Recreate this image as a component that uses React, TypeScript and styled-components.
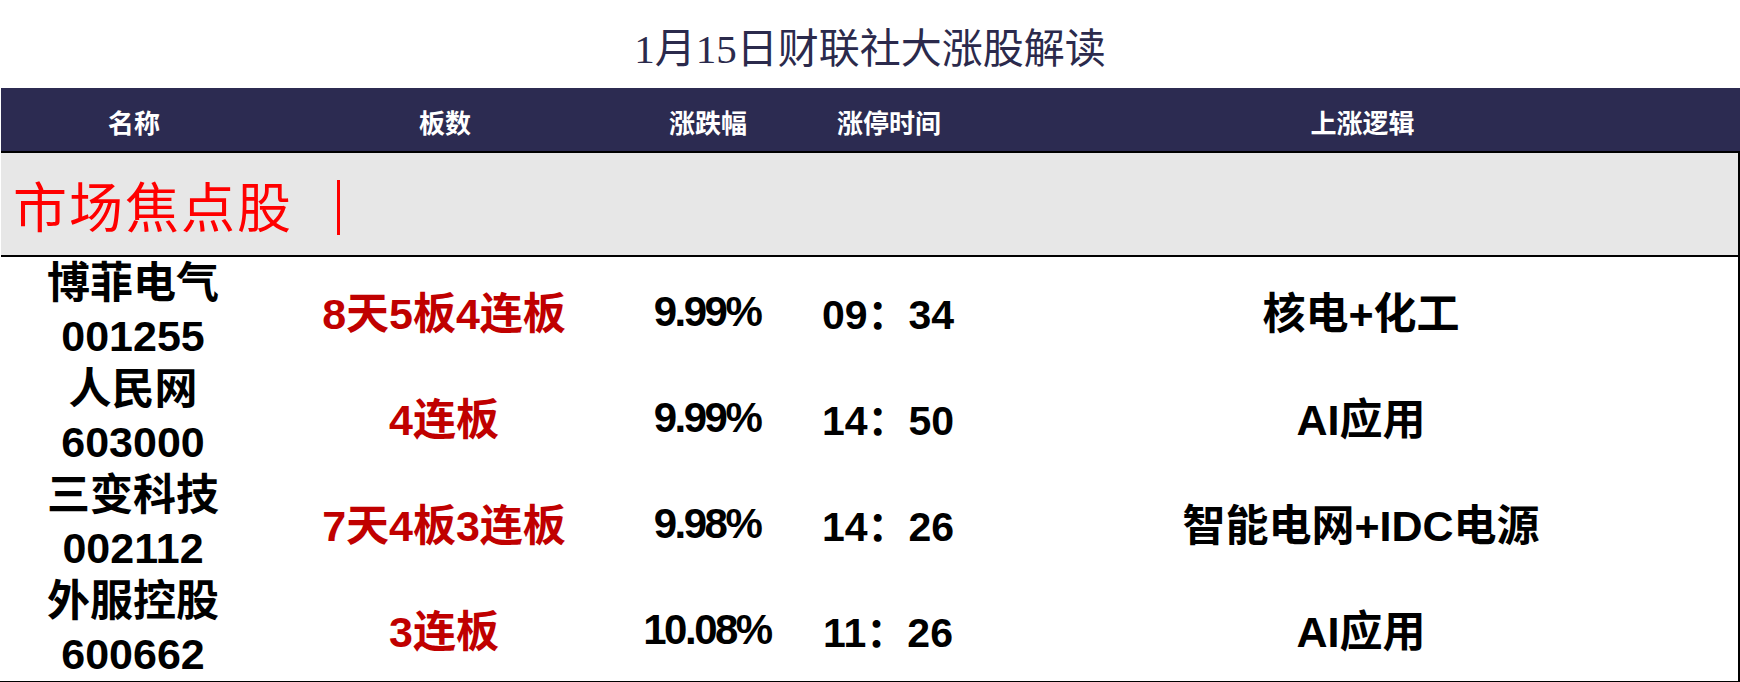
import React from 'react';
import styled, { createGlobalStyle } from 'styled-components';

interface Stock {
  name: string;
  code: string;
  board: string;
  change: string;
  time: string;
  logic: string;
}

const stocks: Stock[] = [
  { name: '博菲电气', code: '001255', board: '8天5板4连板', change: '9.99%', time: '09：34', logic: '核电+化工' },
  { name: '人民网', code: '603000', board: '4连板', change: '9.99%', time: '14：50', logic: 'AI应用' },
  { name: '三变科技', code: '002112', board: '7天4板3连板', change: '9.98%', time: '14：26', logic: '智能电网+IDC电源' },
  { name: '外服控股', code: '600662', board: '3连板', change: '10.08%', time: '11：26', logic: 'AI应用' },
];

const COLUMNS = '266px 356px 170px 192px 1fr';

const GlobalStyle = createGlobalStyle`
  html, body {
    margin: 0;
    padding: 0;
    background: #fff;
  }
  body {
    font-family: 'Liberation Sans', 'Noto Sans CJK SC', sans-serif;
  }
`;

const StyledPage = styled.div`
  width: 1740px;
  display: flex;
  flex-direction: column;
`;

const StyledTitle = styled.h1`
  margin: 0;
  height: 88px;
  display: flex;
  align-items: center;
  justify-content: center;
  padding-top: 2px;
  box-sizing: border-box;
  font-family: 'Liberation Serif', 'Noto Sans CJK SC', serif;
  font-size: 41px;
  font-weight: 400;
  color: #2b2a4c;
`;

const StyledHeader = styled.div`
  display: grid;
  grid-template-columns: ${COLUMNS};
  height: 63px;
  align-items: center;
  background: #2c2b51;
  margin-left: 1px;
`;

const StyledHeaderCell = styled.div`
  text-align: center;
  color: #fff;
  font-size: 26px;
  font-weight: 700;
  padding-top: 3px;
`;

const StyledSection = styled.div`
  height: 106px;
  box-sizing: border-box;
  display: flex;
  align-items: center;
  gap: 44px;
  padding: 0 0 0 12px;
  background: #e7e7e7;
  border-top: 2px solid #000;
  border-bottom: 2px solid #000;
  border-right: 2px solid #000;
  margin-left: 1px;
`;

const StyledSectionLabel = styled.span`
  font-family: 'Liberation Serif', 'Noto Sans CJK SC', serif;
  font-size: 54px;
  font-weight: 400;
  color: #ff0000;
  letter-spacing: 2px;
`;

const StyledSectionBar = styled.span`
  width: 3px;
  height: 55px;
  margin-top: 6px;
  background: #ff0000;
`;

const StyledBody = styled.div`
  border-right: 2px solid #000;
  border-bottom: 2px solid #000;
`;

const StyledRow = styled.div`
  display: grid;
  grid-template-columns: ${COLUMNS};
  height: 106px;
  align-items: center;
`;

const StyledCell = styled.div<{ $tone?: 'red'; $size?: number; $spacing?: number; $shift?: number }>`
  text-align: center;
  font-size: ${(p) => p.$size ?? 43}px;
  font-weight: 700;
  color: ${(p) => (p.$tone === 'red' ? '#c00000' : '#000')};
  letter-spacing: ${(p) => p.$spacing ?? 0}px;
  padding-top: ${(p) => p.$shift ?? 0}px;
  white-space: nowrap;
`;

const StyledNameCell = styled.div`
  display: flex;
  flex-direction: column;
  align-items: center;
  font-size: 43px;
  font-weight: 700;
  line-height: 53px;
  color: #000;
`;

export default function App() {
  return (
    <>
      <GlobalStyle />
      <StyledPage>
        <StyledTitle>1月15日财联社大涨股解读</StyledTitle>
        <StyledHeader>
          <StyledHeaderCell>名称</StyledHeaderCell>
          <StyledHeaderCell>板数</StyledHeaderCell>
          <StyledHeaderCell>涨跌幅</StyledHeaderCell>
          <StyledHeaderCell>涨停时间</StyledHeaderCell>
          <StyledHeaderCell>上涨逻辑</StyledHeaderCell>
        </StyledHeader>
        <StyledSection>
          <StyledSectionLabel>市场焦点股</StyledSectionLabel>
          <StyledSectionBar />
        </StyledSection>
        <StyledBody>
          {stocks.map((s) => (
            <StyledRow key={s.code}>
              <StyledNameCell>
                <span>{s.name}</span>
                <span>{s.code}</span>
              </StyledNameCell>
              <StyledCell $tone="red">{s.board}</StyledCell>
              <StyledCell $size={42} $spacing={-2.5} $shift={4}>{s.change}</StyledCell>
              <StyledCell $size={41} $shift={2}>{s.time}</StyledCell>
              <StyledCell>{s.logic}</StyledCell>
            </StyledRow>
          ))}
        </StyledBody>
      </StyledPage>
    </>
  );
}
